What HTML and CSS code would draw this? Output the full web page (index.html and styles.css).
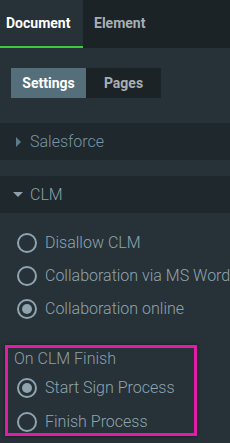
FILE: index.html
```html
<!DOCTYPE html>
<html>
<head>
<meta charset="utf-8">
<link rel="stylesheet" href="styles.css">
</head>
<body>
<div class="tabs">
  <div class="tab active">Document</div>
  <div class="tab">Element</div>
</div>
<div class="seg">
  <div class="seg-btn on">Settings</div>
  <div class="seg-btn">Pages</div>
</div>
<div class="section-head sf"><span class="tri-right"></span>Salesforce</div>
<div class="section-head clm"><span class="tri-down"></span>CLM</div>
<div class="radios">
  <div class="radio"><span class="circle"></span>Disallow CLM</div>
  <div class="radio"><span class="circle"></span>Collaboration via MS Word</div>
  <div class="radio"><span class="circle checked"></span>Collaboration online</div>
</div>
<div class="finish">
  <div class="finish-label">On CLM Finish</div>
  <div class="radios inner">
    <div class="radio"><span class="circle checked"></span>Start Sign Process</div>
    <div class="radio"><span class="circle"></span>Finish Process</div>
  </div>
</div>
</body>
</html>
```
FILE: styles.css
```css
html, body {
  margin: 0;
  padding: 0;
}
body {
  width: 230px;
  height: 443px;
  overflow: hidden;
  background: #263238;
  font-family: Roboto, "Liberation Sans", sans-serif;
  color: #90a4ae;
}
.tabs {
  display: flex;
  height: 48px;
  background: #1c2327;
}
.tab {
  box-sizing: border-box;
  height: 48px;
  line-height: 46px;
  font-size: 14px;
  font-weight: 700;
  color: #a7afb3;
  padding-left: 11px;
}
.tab.active {
  width: 83px;
  padding-left: 6px;
  background: #263238;
  color: #ffffff;
  border-bottom: 2px solid #3ccb3c;
}
.seg {
  display: flex;
  margin: 20px 0 0 11px;
  height: 30px;
}
.seg-btn {
  width: 75px;
  height: 30px;
  line-height: 30px;
  text-align: center;
  font-size: 14px;
  font-weight: 700;
  background: #1c2327;
  color: #a7afb3;
}
.seg-btn.on {
  background: #546e7a;
  color: #ffffff;
}
.section-head {
  display: flex;
  align-items: center;
  height: 37px;
  background: #1f282d;
  font-size: 16px;
  font-weight: 300;
}
.section-head.sf {
  margin-top: 25px;
  color: #7c95a2;
}
.section-head.clm {
  margin-top: 16px;
  color: #8e9fa7;
}
.tri-right {
  width: 0;
  height: 0;
  border-top: 5px solid transparent;
  border-bottom: 5px solid transparent;
  border-left: 5px solid #5e7c8b;
  margin: 0 9px 0 16px;
}
.tri-down {
  width: 0;
  height: 0;
  border-left: 5px solid transparent;
  border-right: 5px solid transparent;
  border-top: 5px solid #8e9fa7;
  margin: 0 7px 0 13px;
}
.radios {
  display: flex;
  flex-direction: column;
  gap: 13px;
  padding: 20px 0 0 17px;
}
.radio {
  display: flex;
  align-items: center;
  height: 20px;
  line-height: 20px;
  font-size: 16px;
  font-weight: 300;
  color: #90a4ae;
  white-space: nowrap;
}
.circle {
  box-sizing: border-box;
  flex: none;
  width: 20px;
  height: 20px;
  border: 2px solid #90a4ae;
  border-radius: 50%;
  margin-right: 8px;
  display: flex;
  align-items: center;
  justify-content: center;
}
.circle.checked::after {
  content: "";
  width: 10px;
  height: 10px;
  border-radius: 50%;
  background: #90a4ae;
}
.finish {
  box-sizing: border-box;
  width: 192px;
  margin: 26px 0 0 5px;
  border: 3px solid #e21ba8;
  box-shadow: 0 0 3px rgba(0, 0, 0, 0.55);
  padding: 1px 0 1px 0;
}
.finish-label {
  height: 20px;
  line-height: 20px;
  font-size: 16px;
  font-weight: 300;
  color: #8e9fa7;
  padding-left: 6px;
}
.radios.inner {
  padding: 9px 0 0 9px;
  gap: 14px;
}
```
